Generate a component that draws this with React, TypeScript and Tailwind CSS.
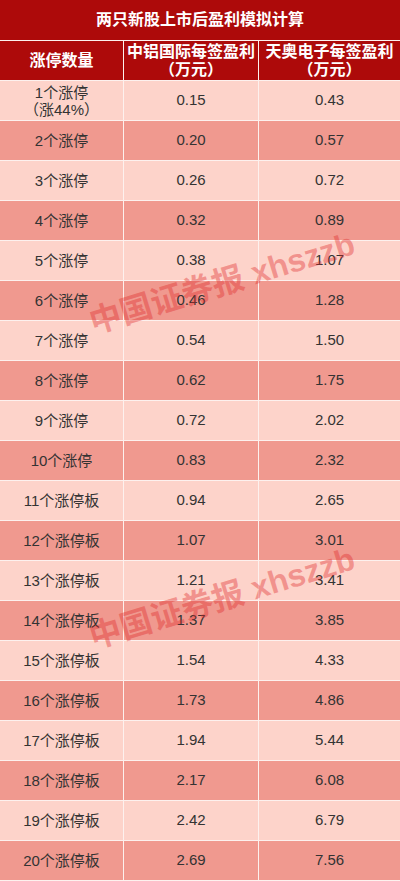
const rows: [string, string, string][] = [
  ["1个涨停", "0.15", "0.43"],
  ["2个涨停", "0.20", "0.57"],
  ["3个涨停", "0.26", "0.72"],
  ["4个涨停", "0.32", "0.89"],
  ["5个涨停", "0.38", "1.07"],
  ["6个涨停", "0.46", "1.28"],
  ["7个涨停", "0.54", "1.50"],
  ["8个涨停", "0.62", "1.75"],
  ["9个涨停", "0.72", "2.02"],
  ["10个涨停", "0.83", "2.32"],
  ["11个涨停板", "0.94", "2.65"],
  ["12个涨停板", "1.07", "3.01"],
  ["13个涨停板", "1.21", "3.41"],
  ["14个涨停板", "1.37", "3.85"],
  ["15个涨停板", "1.54", "4.33"],
  ["16个涨停板", "1.73", "4.86"],
  ["17个涨停板", "1.94", "5.44"],
  ["18个涨停板", "2.17", "6.08"],
  ["19个涨停板", "2.42", "6.79"],
  ["20个涨停板", "2.69", "7.56"],
];

function Watermark({ top }: { top: string }) {
  return (
    <div
      className={`pointer-events-none absolute left-[222px] ${top} -translate-x-1/2 -translate-y-1/2 rotate-[-17deg] whitespace-nowrap text-[32px] font-bold leading-none text-[rgba(222,40,40,0.38)]`}
    >
      中国证券报 xhszzb
    </div>
  );
}

export default function App() {
  return (
    <div
      className="relative w-[400px] h-[881px] overflow-hidden bg-[#fdf1ee]"
      style={{ fontFamily: '"Liberation Sans", "Noto Sans CJK SC", sans-serif' }}
    >
      <div className="grid grid-cols-[123px_134px_1fr] gap-px">
        <div className="col-span-3 h-[40px] bg-[#ad0a0a] flex items-center justify-center text-white font-bold text-[16px]">
          两只新股上市后盈利模拟计算
        </div>

        <div className="h-[39px] bg-[#ad0a0a] flex items-center justify-center text-white font-bold text-[16px]">
          涨停数量
        </div>
        <div className="h-[39px] bg-[#ad0a0a] flex flex-col items-center justify-center text-white font-bold text-[16px] leading-[18px]">
          <span>中铝国际每签盈利</span>
          <span>（万元）</span>
        </div>
        <div className="h-[39px] bg-[#ad0a0a] flex flex-col items-center justify-center text-white font-bold text-[16px] leading-[18px]">
          <span>天奥电子每签盈利</span>
          <span>（万元）</span>
        </div>

        {rows.map(([label, a, b], i) => {
          const bg = i % 2 === 0 ? "bg-[#fdd3ca]" : "bg-[#f0998f]";
          return [
            <div
              key={`l${i}`}
              className={`h-[39px] ${bg} flex flex-col items-center justify-center text-[15px] text-[#333] leading-[17px]`}
            >
              <span>{label}</span>
              {i === 0 && <span>（涨44%）</span>}
            </div>,
            <div key={`a${i}`} className={`h-[39px] ${bg} flex items-center justify-center text-[15px] text-[#333]`}>
              {a}
            </div>,
            <div key={`b${i}`} className={`h-[39px] ${bg} flex items-center justify-center text-[15px] text-[#333]`}>
              {b}
            </div>,
          ];
        })}
      </div>

      <Watermark top="top-[283px]" />
      <Watermark top="top-[598px]" />
    </div>
  );
}
